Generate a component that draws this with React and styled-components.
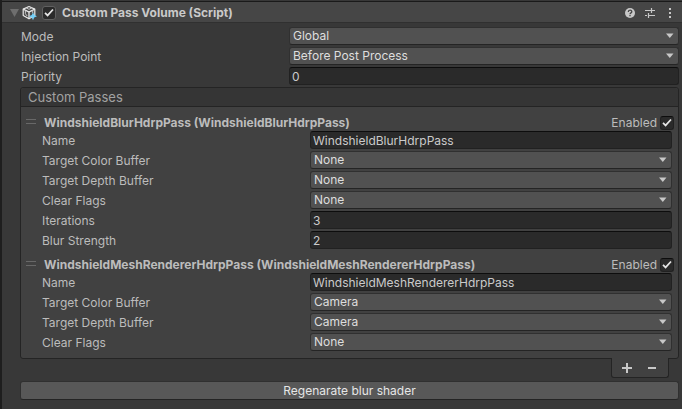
import React, { useId, useState } from "react";
import styled, { createGlobalStyle } from "styled-components";

const GlobalStyle = createGlobalStyle`
  * { box-sizing: border-box; }
  body {
    margin: 0;
    background: #383838;
    color: #bcbcbc;
    font-family: Inter, "Liberation Sans", sans-serif;
    font-size: 12px;
    line-height: 18px;
  }
  button, input, select { font: inherit; color: inherit; margin: 0; }
`;

const Inspector = styled.main`
  min-height: 100vh;
  padding-top: 1px;
  border-left: 2px solid #1e1e1e;
  background: #383838;
`;

const Header = styled.header`
  display: flex;
  align-items: center;
  height: 22px;
  padding: 1px 2px 0 6px;
  border-top: 1px solid #1a1a1a;
  border-bottom: 1px solid #303030;
  background: #464646;
`;

const Title = styled.h1`
  flex: 1;
  margin: 0 0 0 6px;
  font-size: 12px;
  font-weight: 700;
  line-height: 18px;
  color: #cacaca;
`;

const IconButton = styled.button`
  display: flex;
  align-items: center;
  justify-content: center;
  width: ${(p) => p.$width || 20}px;
  height: 18px;
  padding: 0;
  border: 0;
  background: none;
  color: #c4c4c4;
`;

const ScriptIcon = styled.svg`
  flex: none;
  margin: 0 5px 0 2px;
`;

const Body = styled.div`
  padding: 4px 3px 9px 18px;
`;

const Fields = styled.div`
  display: grid;
  gap: 2px;
  padding-left: ${(p) => p.$inset || 0}px;
`;

const FieldRow = styled.div`
  display: grid;
  grid-template-columns: 268px minmax(0, 1fr);
  grid-template-rows: 18px;
`;

const Label = styled.label`
  line-height: 20px;
  white-space: nowrap;
`;

const TextInput = styled.input`
  width: 100%;
  height: 18px;
  padding: 0 2px;
  border: 1px solid #212121;
  border-top-color: #0d0d0d;
  border-radius: 3px;
  outline: none;
  background: #2a2a2a;
  color: #cacaca;
  line-height: 16px;
`;

const SelectBox = styled.div`
  display: grid;
  align-items: center;
  > * { grid-area: 1 / 1; }
  > svg { justify-self: end; margin-right: 5px; pointer-events: none; }
`;

const Select = styled.select`
  appearance: none;
  width: 100%;
  height: 18px;
  padding: 0 18px 1px 3px;
  border: 1px solid #303030;
  border-bottom-color: #242424;
  border-radius: 3px;
  outline: none;
  background: #515151;
  color: #dedede;
  line-height: 14px;
`;

const CheckBox = styled.span`
  display: grid;
  flex: none;
  width: 14px;
  height: 14px;
  > * { grid-area: 1 / 1; }
  > svg { pointer-events: none; visibility: hidden; }
  > input:checked + svg { visibility: visible; }
`;

const CheckInput = styled.input`
  appearance: none;
  width: 14px;
  height: 14px;
  border: 1px solid ${(p) => (p.$light ? "#606060" : "#212121")};
  border-top-color: ${(p) => (p.$light ? "#606060" : "#0d0d0d")};
  border-radius: 3px;
  background: #2a2a2a;
`;

const List = styled.section`
  margin-top: 2px;
  border: 1px solid #242424;
  border-radius: 3px;
  background: #414141;
`;

const ListHeader = styled.h2`
  height: 19px;
  margin: 0;
  padding: 0 7px;
  border-bottom: 1px solid #242424;
  border-radius: 3px 3px 0 0;
  background: #353535;
  color: #a2a2a2;
  font-size: 13px;
  font-weight: 400;
  line-height: 19px;
`;

const Passes = styled.div`
  display: grid;
  gap: 7px;
  padding: 7px 6px 7px 5px;
`;

const PassHeader = styled.div`
  display: flex;
  align-items: center;
  height: 17px;
  margin-right: -2px;
  line-height: 17px;
`;

const Grip = styled.span`
  flex: none;
  width: 10px;
  height: 5px;
  margin: 0 8px 2px 0;
  border: solid #686868;
  border-width: 1px 0;
`;

const PassTitle = styled.h3`
  flex: 1;
  min-width: 0;
  margin: 0;
  font-size: 12px;
  font-weight: 700;
  line-height: 17px;
  white-space: nowrap;
`;

const EnabledLabel = styled.label`
  margin-right: 3px;
`;

const ListFooter = styled.div`
  display: flex;
  align-items: center;
  justify-content: center;
  gap: 5px;
  width: 58px;
  height: 20px;
  margin: -1px 10px 3px auto;
  padding-right: 2px;
  border: 1px solid #242424;
  border-top: 0;
  border-radius: 0 0 3px 3px;
  background: #414141;
`;

const ActionButton = styled.button`
  display: block;
  width: 100%;
  height: 19px;
  padding: 0;
  border: 1px solid #303030;
  border-bottom-color: #242424;
  border-radius: 3px;
  background: #585858;
  color: #e6e6e6;
  line-height: 17px;
`;

function Check({ id, label, light }) {
  return (
    <CheckBox>
      <CheckInput id={id} type="checkbox" defaultChecked aria-label={label} $light={light} />
      <svg width="14" height="14" viewBox="0 0 14 14" fill="none" stroke="#e6e6e6" strokeWidth="1.7">
        <path d="M3 6.8l2.6 2.6L11 3.5" />
      </svg>
    </CheckBox>
  );
}

function Field({ label, value, options }) {
  const id = useId();
  return (
    <FieldRow>
      <Label htmlFor={id}>{label}</Label>
      {options ? (
        <SelectBox>
          <Select id={id} defaultValue={value}>
            {options.map((o) => <option key={o}>{o}</option>)}
          </Select>
          <svg width="8" height="6" viewBox="0 0 8 6"><path d="M0 0.5h7.5L3.8 5z" fill="#c8c8c8" /></svg>
        </SelectBox>
      ) : (
        <TextInput id={id} type="text" defaultValue={value} />
      )}
    </FieldRow>
  );
}

const BUFFERS = ["None", "Camera", "Custom"];
const FLAGS = ["None", "Color", "Depth", "All"];

const PASSES = [
  {
    type: "WindshieldBlurHdrpPass",
    fields: [
      { label: "Name", value: "WindshieldBlurHdrpPass" },
      { label: "Target Color Buffer", value: "None", options: BUFFERS },
      { label: "Target Depth Buffer", value: "None", options: BUFFERS },
      { label: "Clear Flags", value: "None", options: FLAGS },
      { label: "Iterations", value: "3" },
      { label: "Blur Strength", value: "2" },
    ],
  },
  {
    type: "WindshieldMeshRendererHdrpPass",
    fields: [
      { label: "Name", value: "WindshieldMeshRendererHdrpPass" },
      { label: "Target Color Buffer", value: "Camera", options: BUFFERS },
      { label: "Target Depth Buffer", value: "Camera", options: BUFFERS },
      { label: "Clear Flags", value: "None", options: FLAGS },
    ],
  },
];

function Pass({ type, fields }) {
  const id = useId();
  return (
    <article>
      <PassHeader>
        <Grip />
        <PassTitle>{type} ({type})</PassTitle>
        <EnabledLabel htmlFor={id}>Enabled</EnabledLabel>
        <Check id={id} />
      </PassHeader>
      <Fields $inset={16}>
        {fields.map((f) => <Field key={f.label} {...f} />)}
      </Fields>
    </article>
  );
}

export default function App() {
  const [open, setOpen] = useState(true);
  return (
    <>
      <GlobalStyle />
      <Inspector>
        <Header>
          <IconButton $width={12} aria-label="Toggle component" aria-expanded={open} onClick={() => setOpen(!open)}>
            <svg width="9" height="8" viewBox="0 0 9 8"><path d="M0 0h9L4.5 8z" fill="#6e6e6e" /></svg>
          </IconButton>
          <ScriptIcon width="15" height="16" viewBox="0 0 15 16" fill="none">
            <path d="M7 1.5l5.8 2.6v6.4L7 13.8l-5.8-3.3V4.1z" fill="#4a4a4a" stroke="#e8e8e8" strokeWidth="1.2" strokeLinejoin="round" />
            <path d="M1.2 4.1L7 7l5.8-2.9M7 7v6.8" stroke="#e8e8e8" strokeWidth="1.3" />
            <path d="M4.2 2.9L7 4.3l2.8-1.4M3.4 5.6v3.2L5.2 11M10.7 5.4v2.8" stroke="#c4c4c4" strokeWidth="1" />
            <path d="M11 7.2l1.2 2.8 2.8 1.2-2.8 1.2L11 15.2l-1.2-2.8L7 11.2 9.8 10z" fill="#74cff7" />
          </ScriptIcon>
          <Check label="Enable Custom Pass Volume" light />
          <Title>Custom Pass Volume (Script)</Title>
          <IconButton aria-label="Help">
            <svg width="10" height="10" viewBox="0 0 10 10" fill="none">
              <circle cx="5" cy="5" r="5" fill="#c8c8c8" />
              <path d="M3.3 3.9C3.3 1.5 6.8 1.6 6.8 3.7 6.8 4.9 5 4.8 5 6.2M5 7v1.3" stroke="#464646" strokeWidth="1.3" />
            </svg>
          </IconButton>
          <IconButton aria-label="Presets">
            <svg width="10" height="10" viewBox="0 0 10 10" fill="none" stroke="#c8c8c8">
              <path d="M0 2.5h6M6.5 2.5h3.5M6.5 0v5M0 7.5h2M3.5 7.5h6.5M3.5 5v5" strokeWidth="1.2" />
            </svg>
          </IconButton>
          <IconButton aria-label="More options">
            <svg width="2" height="10" viewBox="0 0 2 10" fill="#c8c8c8">
              <path d="M0 0h2v2H0zM0 4h2v2H0zM0 8h2v2H0z" />
            </svg>
          </IconButton>
        </Header>
        {open && (
          <Body>
            <Fields $inset={1}>
              <Field label="Mode" value="Global" options={["Global", "Local"]} />
              <Field label="Injection Point" value="Before Post Process" options={["Before Rendering", "Before Transparent", "Before Post Process", "After Post Process"]} />
              <Field label="Priority" value="0" />
            </Fields>
            <List>
              <ListHeader>Custom Passes</ListHeader>
              <Passes>
                {PASSES.map((p) => <Pass key={p.type} {...p} />)}
              </Passes>
            </List>
            <ListFooter>
              <IconButton aria-label="Add pass">
                <svg width="10" height="10" viewBox="0 0 10 10" fill="#c8c8c8"><path d="M4 0h2v4h4v2H6v4H4V6H0V4h4z" /></svg>
              </IconButton>
              <IconButton aria-label="Remove pass">
                <svg width="8" height="2" viewBox="0 0 8 2" fill="#c8c8c8"><path d="M0 0h8v2H0z" /></svg>
              </IconButton>
            </ListFooter>
            <ActionButton>Regenarate blur shader</ActionButton>
          </Body>
        )}
      </Inspector>
    </>
  );
}
